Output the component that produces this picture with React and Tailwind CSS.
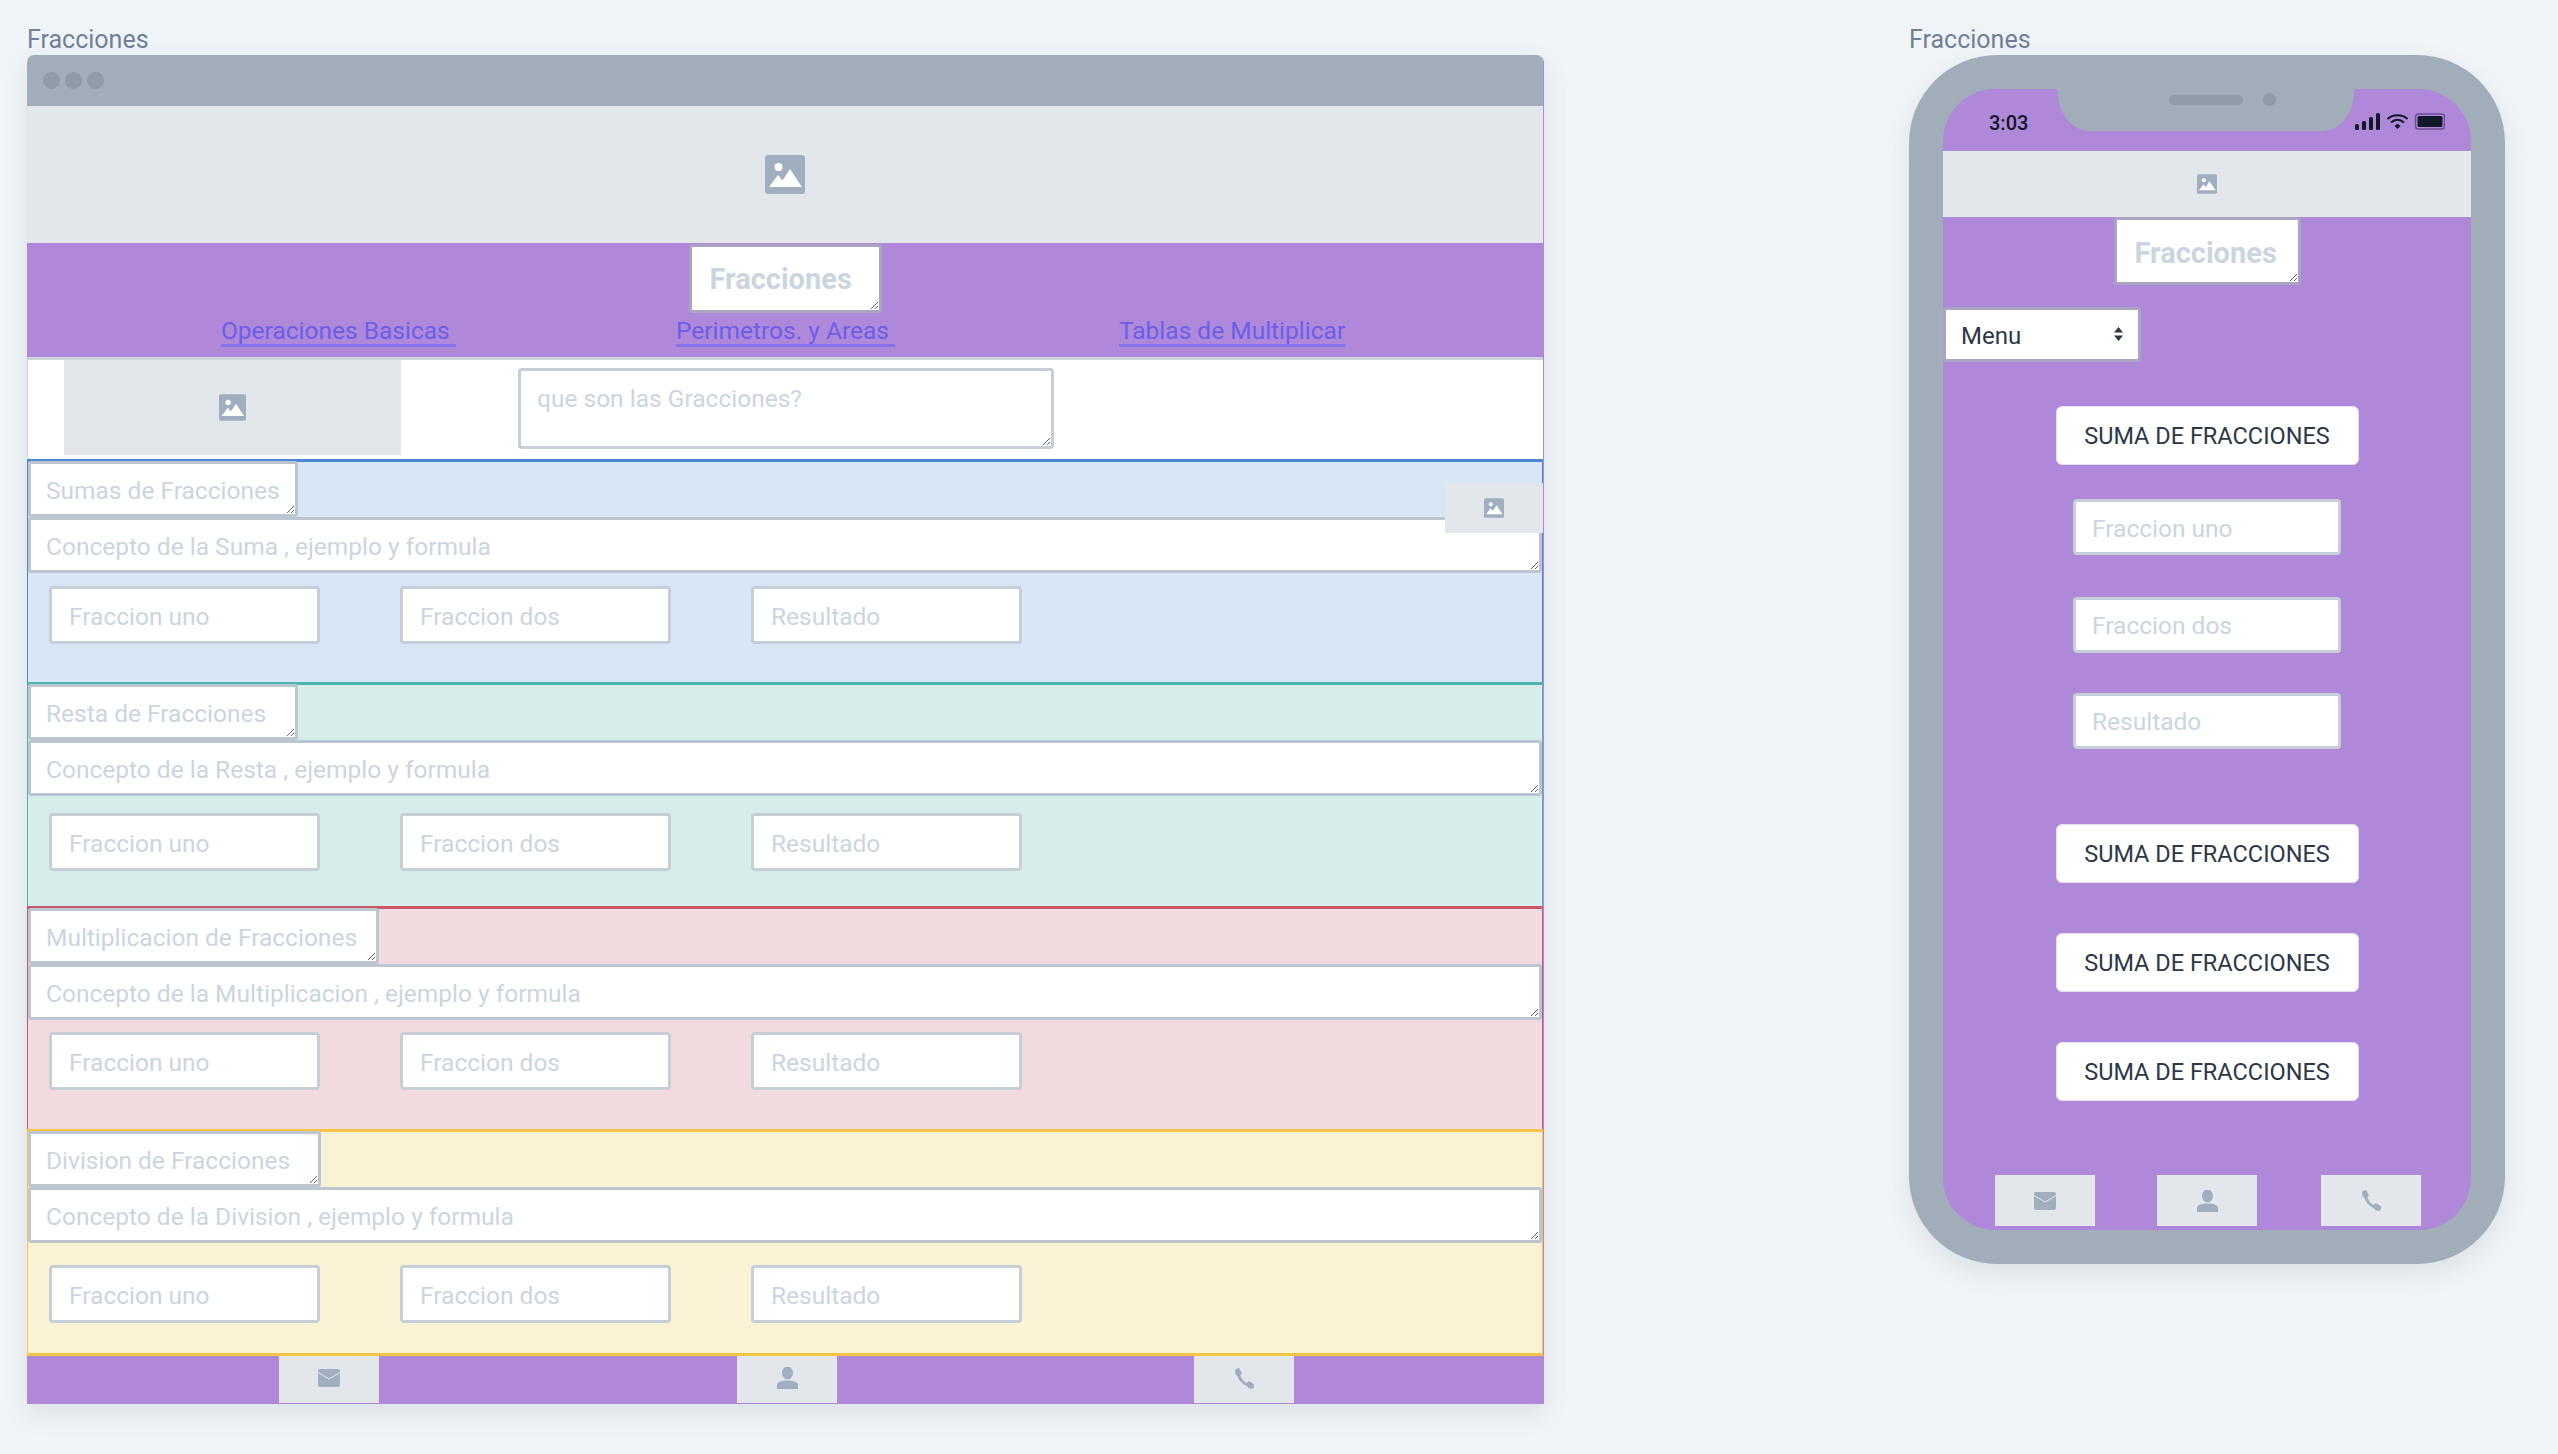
import React from 'react';

const ImageIcon = ({ className }) => (
  <svg viewBox="0 0 40 39" className={className}>
    <rect width="40" height="39" rx="3" fill="#a0aec0" />
    <circle cx="13.5" cy="12" r="4" fill="#fff" />
    <path d="M4 32 L13 20 L17.5 25.5 L25 14 L37 32 Z" fill="#fff" />
  </svg>
);
const MailIcon = () => (
  <svg viewBox="0 0 22 18" className="w-[22px] h-[18px]">
    <rect width="22" height="18" rx="2" fill="#a0aec0" />
    <path d="M0 3.5 L11 10 L22 3.5" fill="none" stroke="#e2e6eb" strokeWidth="1" />
  </svg>
);
const PersonIcon = () => (
  <svg viewBox="0 0 21 22" className="w-[21px] h-[22px]">
    <ellipse cx="10.5" cy="6" rx="5.5" ry="6.5" fill="#a0aec0" />
    <path d="M0 22 V18 C0 15 4 13.5 10.5 13.5 C17 13.5 21 15 21 18 V22 Z" fill="#a0aec0" />
  </svg>
);
const PhoneIcon = () => (
  <svg viewBox="0 0 22 22" className="w-[21px] h-[21px]">
    <path d="M4 3 C4 10 10 18 18 18.5" fill="none" stroke="#a0aec0" strokeWidth="3" />
    <path d="M1 3 C1 1.500 2 .8 3.500 .5 L5.500 0 L8.500 6 L5.500 8.500 L3 8 C1.500 6 1 4.500 1 3 Z" fill="#a0aec0" />
    <path d="M13 16 L15.500 13.500 L21 17 L21 19 C21 20.500 19.500 22 18.500 22 C16.500 22 15 21 14 20 Z" fill="#a0aec0" />
  </svg>
);

const field = 'block bg-white border-[3px] border-[#c6ced8] rounded-[4px] outline-none placeholder:text-[#cbd5e0] text-[24.5px]';

const Area = ({ placeholder, className }) => (
  <textarea placeholder={placeholder} aria-label={placeholder} className={`block bg-white outline-none resize placeholder:text-[#cbd5e0] ${className}`} />
);

const Inputs = ({ className }) => (
  <div className={`flex gap-[80px] pl-[21px] ${className}`}>
    {['Fraccion uno', 'Fraccion dos', 'Resultado'].map((t) => (
      <input key={t} placeholder={t} aria-label={t} className={`${field} w-[271px] h-[58px] pl-[17px] pt-[2px]`} />
    ))}
  </div>
);

const Section = ({ title, concept, wrap, titleW, gap }) => (
  <section className={`border-t-[3px] border-x ${wrap}`}>
    <Area placeholder={title} className={`${titleW} h-[56px] -mt-px border-[3px] border-[#bcc5d0] rounded-[3px] pl-[15px] pt-[12px] text-[24.5px] leading-[30px]`} />
    <Area placeholder={concept} className="w-full h-[56px] border-[3px] border-[#bcc5d0] rounded-[3px] pl-[15px] pt-[12px] text-[24.5px] leading-[30px]" />
    <Inputs className={gap} />
  </section>
);

const Label = () => <div className="h-[29px] text-[25px] leading-[28px] text-[#718096]">Fracciones</div>;

const linkClass = 'underline decoration-[3px] underline-offset-[5px] decoration-[#8572ea] text-[#6a5fe8] text-[24.5px] leading-[27px]';

const Btn = ({ className }) => (
  <button className={`block w-[303px] h-[59px] pt-[3px] bg-white rounded-[6px] border border-[#e6dcf4] text-[#2d3748] text-[23.5px] ${className}`}>SUMA DE FRACCIONES</button>
);

export default function App() {
  return (
    <div className="flex min-h-[1454px] bg-[#f0f4f7] font-['Roboto',sans-serif] overflow-hidden">
      <div className="ml-[27px] pt-[26px] w-[1517px] shrink-0">
        <Label />
        <div className="border-r border-[#b088da] rounded-t-[7px] shadow-[0_10px_24px_rgba(100,116,139,0.14)]">
          <div className="h-[51px] bg-[#a1adb8] rounded-t-[7px] flex items-center gap-[5px] pl-[16px]">
            <span className="w-[17px] h-[17px] rounded-full bg-[#8f9ba8]" />
            <span className="w-[17px] h-[17px] rounded-full bg-[#8f9ba8]" />
            <span className="w-[17px] h-[17px] rounded-full bg-[#8f9ba8]" />
          </div>
          <div className="h-[137px] bg-[#e3e7ec] flex items-center justify-center">
            <ImageIcon className="w-[40px] h-[39px]" />
          </div>
          <header className="h-[114px] bg-[#b088da] pt-px">
            <Area placeholder="Fracciones" className="w-[193px] h-[69px] mx-auto border-[3px] border-[#a9a4c4] rounded-[3px] pl-[18px] pt-[15px] text-[29px] leading-[34px] font-bold" />
            <nav className="grid grid-cols-[455px_443px_auto] pl-[194px] mt-[4px]">
              <a href="#" className={linkClass}>Operaciones Basicas&nbsp;</a>
              <a href="#" className={linkClass}>Perimetros. y Areas&nbsp;</a>
              <a href="#" className={linkClass}>Tablas de Multiplicar</a>
            </nav>
          </header>
          <div className="h-[102px] bg-white border-t-[3px] border-[#cdd3da] border-l flex items-start">
            <div className="ml-[36px] w-[337px] h-[95px] bg-[#e3e7ec] flex items-center justify-center">
              <ImageIcon className="w-[27px] h-[27px]" />
            </div>
            <Area placeholder="que son las Gracciones?" className="ml-[117px] mt-[8px] w-[536px] h-[81px] border-[3px] border-[#c6ced8] rounded-[4px] pl-[16px] pt-[13px] text-[24.5px] leading-[30px]" />
          </div>
          <div className="relative">
            <div className="absolute right-0 top-[24px] w-[98px] h-[50px] bg-[#e3e7ec] flex items-center justify-center z-10">
              <ImageIcon className="w-[20px] h-[20px]" />
            </div>
            <Section title="Sumas de Fracciones" concept="Concepto de la Suma , ejemplo y formula" wrap="h-[223px] bg-[#d9e6f6] border-[#4a87d4]" titleW="w-[270px]" gap="mt-[13px]" />
            <Section title="Resta de Fracciones" concept="Concepto de la Resta , ejemplo y formula" wrap="h-[224px] bg-[#d7ede9] border-[#4db6ac]" titleW="w-[270px]" gap="mt-[17px]" />
            <Section title="Multiplicacion de Fracciones" concept="Concepto de la Multiplicacion , ejemplo y formula" wrap="h-[223px] bg-[#f1dbdf] border-[#c9586a]" titleW="w-[351px]" gap="mt-[12px]" />
            <Section title="Division de Fracciones" concept="Concepto de la Division , ejemplo y formula" wrap="h-[224px] bg-[#faf2d4] border-[#f6c344]" titleW="w-[293px]" gap="mt-[22px]" />
            <div className="h-[3px] bg-[#f6c344]" />
          </div>
          <footer className="h-[48px] bg-[#b088da] flex pl-[252px]">
            <div className="-mt-[3px] w-[100px] h-[50px] bg-[#e3e7ec] flex items-center justify-center"><MailIcon /></div>
            <div className="-mt-[3px] ml-[358px] w-[100px] h-[50px] bg-[#e3e7ec] flex items-center justify-center"><PersonIcon /></div>
            <div className="-mt-[3px] ml-[357px] w-[100px] h-[50px] bg-[#e3e7ec] flex items-center justify-center"><PhoneIcon /></div>
          </footer>
        </div>
      </div>

      <div className="ml-[365px] pt-[26px] w-[596px] shrink-0">
        <Label />
        <div className="h-[1209px] rounded-[88px] bg-[#a1adb8] p-[34px] shadow-[0_10px_24px_rgba(100,116,139,0.14)]">
          <div className="relative h-[1141px] rounded-[52px] bg-[#b088da] overflow-hidden flex flex-col items-center">
            <svg viewBox="0 0 304 42" className="absolute left-[111px] top-0 w-[304px] h-[42px]">
              <path d="M0 0 H304 Q300 0 300 4 C300 24 286 42 268 42 H36 C18 42 4 24 4 4 Q4 0 0 0 Z" fill="#a1adb8" />
            </svg>
            <span className="absolute left-[226px] top-[6px] w-[74px] h-[10px] rounded-full bg-[#8f9ba8]" />
            <span className="absolute left-[320px] top-[4px] w-[13px] h-[13px] rounded-full bg-[#8f9ba8]" />
            <div className="w-full h-[62px] shrink-0 flex items-start">
              <span className="ml-[46px] mt-[20px] text-[20px] leading-[28px] font-medium text-[#111827]">3:03</span>
              <svg viewBox="0 0 90 18" className="absolute left-[412px] top-[24px] w-[90px] h-[18px]">
                <rect x="0" y="11" width="4" height="6" rx="1.500" fill="#111827" />
                <rect x="7" y="8" width="4" height="9" rx="1.500" fill="#111827" />
                <rect x="14" y="4" width="4" height="13" rx="1.500" fill="#111827" />
                <rect x="21" y="0" width="4" height="17" rx="1.500" fill="#111827" />
                <path d="M32.500 6 C38 1 47 1 52.500 6" fill="none" stroke="#111827" strokeWidth="2.200" />
                <path d="M36 9.500 C40 6 45 6 49 9.500" fill="none" stroke="#111827" strokeWidth="2.200" />
                <path d="M39.500 13 L42.500 10.500 L45.500 13 L42.500 16 Z" fill="#111827" />
                <rect x="60.500" y="1" width="29" height="15" rx="3" fill="none" stroke="#6d4d91" strokeWidth="1.500" />
                <rect x="62.500" y="3" width="25" height="11" rx="1.500" fill="#111827" />
              </svg>
            </div>
            <div className="w-full h-[66px] shrink-0 bg-[#e3e7ec] flex items-center justify-center">
              <ImageIcon className="w-[20px] h-[20px]" />
            </div>
            <Area placeholder="Fracciones" className="w-[187px] h-[68px] border-[3px] border-[#a9a4c4] rounded-[3px] pl-[18px] pt-[16px] text-[29px] leading-[34px] font-bold" />
            <div className="relative self-start mt-[22px]">
              <select aria-label="Menu" className="block appearance-none w-[198px] h-[55px] pt-[2px] bg-white border-[3px] border-[#a9a4c4] rounded-[3px] pl-[15px] text-[#2d3748] text-[24px] outline-none">
                <option>Menu</option>
              </select>
              <svg viewBox="0 0 9 14" className="absolute left-[171px] top-[20px] w-[9px] h-[14px]">
                <path d="M4.500 0 L9 5.500 H0 Z M0 8.500 H9 L4.500 14 Z" fill="#2d3748" />
              </svg>
            </div>
            <Btn className="mt-[44px]" />
            <input placeholder="Fraccion uno" aria-label="Fraccion uno" className={`${field} w-[268px] h-[56px] pl-[16px] pt-[2px] mt-[34px]`} />
            <input placeholder="Fraccion dos" aria-label="Fraccion dos" className={`${field} w-[268px] h-[56px] pl-[16px] pt-[1px] mt-[42px]`} />
            <input placeholder="Resultado" aria-label="Resultado" className={`${field} w-[268px] h-[56px] pl-[16px] pt-[1px] mt-[40px]`} />
            <Btn className="mt-[75px]" />
            <Btn className="mt-[50px]" />
            <Btn className="mt-[50px]" />
            <div className="self-start flex ml-[52px] mt-[74px] gap-[62px]">
              <div className="w-[100px] h-[51px] bg-[#e3e7ec] flex items-center justify-center"><MailIcon /></div>
              <div className="w-[100px] h-[51px] bg-[#e3e7ec] flex items-center justify-center"><PersonIcon /></div>
              <div className="ml-[2px] w-[100px] h-[51px] bg-[#e3e7ec] flex items-center justify-center"><PhoneIcon /></div>
            </div>
          </div>
        </div>
      </div>
    </div>
  );
}
